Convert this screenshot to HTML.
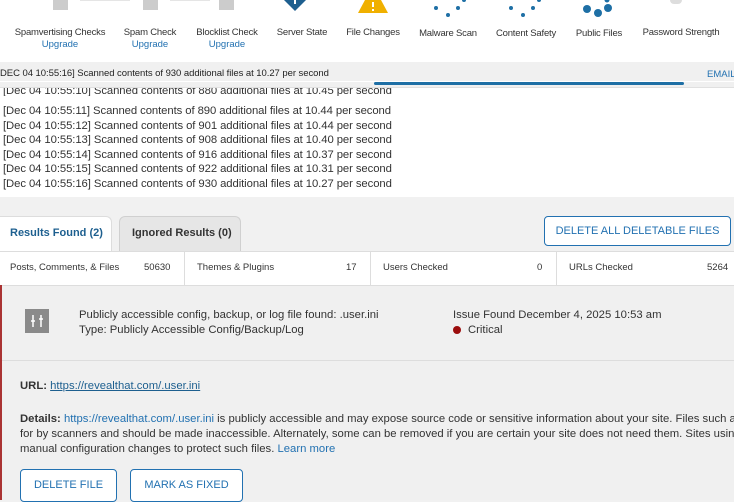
<!DOCTYPE html>
<html><head><meta charset="utf-8"><style>
*{margin:0;padding:0;box-sizing:border-box}
body{width:734px;height:500px;overflow:hidden;background:#f1f1f1;font-family:"Liberation Sans",sans-serif;color:#2c3338;position:relative;letter-spacing:0}
.a{position:absolute;white-space:nowrap}
.lbl{font-size:9.5px;color:#333;text-align:center;width:110px;letter-spacing:-0.2px}
.up{font-size:9.5px;color:#2271b1;text-align:center;width:110px}
.log{font-size:11.3px;color:#333;left:3px;letter-spacing:-0.08px}
.btn{position:absolute;border:1px solid #2271b1;border-radius:4px;background:#fff;color:#2271b1;font-size:11px;text-align:center;letter-spacing:0}
</style></head><body>
<div class="a" style="left:0;top:0;width:734px;height:62px;background:#fff"></div>
<!-- top icons -->
<div class="a" style="left:53px;top:0;width:15px;height:10px;background:#ccc"></div>
<div class="a" style="left:80px;top:0;width:50px;height:1px;background:#e5e5e5"></div>
<div class="a" style="left:143px;top:0;width:15px;height:10px;background:#ccc"></div>
<div class="a" style="left:170px;top:0;width:40px;height:1px;background:#e5e5e5"></div>
<div class="a" style="left:219px;top:0;width:15px;height:10px;background:#ccc"></div>
<svg class="a" style="left:284px;top:0" width="22" height="12"><path d="M0 0 L22 0 L11 11 Z" fill="#1e5f8f"/><rect x="10" y="0" width="2" height="4" fill="#fff"/></svg>
<svg class="a" style="left:357px;top:0" width="32" height="14"><path d="M8 0 L24 0 L31 13 L1 13 Z" fill="#f0b000"/><rect x="15" y="2" width="2" height="5" fill="#fff"/><rect x="15" y="9" width="2" height="2" fill="#fff"/></svg>
<svg class="a" style="left:430px;top:0" width="40" height="20"><circle cx="6" cy="8" r="2" fill="#1e6fa5"/><circle cx="18" cy="15" r="2" fill="#1e6fa5"/><circle cx="28" cy="8" r="2" fill="#1e6fa5"/><circle cx="34" cy="0" r="2" fill="#1e6fa5"/></svg>
<svg class="a" style="left:505px;top:0" width="40" height="20"><circle cx="6" cy="8" r="2" fill="#1e6fa5"/><circle cx="18" cy="15" r="2" fill="#1e6fa5"/><circle cx="28" cy="8" r="2" fill="#1e6fa5"/><circle cx="34" cy="0" r="2" fill="#1e6fa5"/></svg>
<svg class="a" style="left:580px;top:0" width="40" height="20"><circle cx="7" cy="9" r="4" fill="#1e6fa5"/><circle cx="18" cy="13" r="4" fill="#1e6fa5"/><circle cx="28" cy="8" r="4" fill="#1e6fa5"/><circle cx="27" cy="0" r="2.5" fill="#1e6fa5"/></svg>
<div class="a" style="left:670px;top:0;width:12px;height:4px;background:#ddd;border-radius:0 0 6px 6px"></div>
<div class="a lbl" style="left:5px;top:27px">Spamvertising Checks</div>
<div class="a up" style="left:5px;top:39px">Upgrade</div>
<div class="a lbl" style="left:95px;top:27px">Spam Check</div>
<div class="a up" style="left:95px;top:39px">Upgrade</div>
<div class="a lbl" style="left:172px;top:27px">Blocklist Check</div>
<div class="a up" style="left:172px;top:39px">Upgrade</div>
<div class="a lbl" style="left:247px;top:27px">Server State</div>
<div class="a lbl" style="left:318px;top:27px">File Changes</div>
<div class="a lbl" style="left:393px;top:28px">Malware Scan</div>
<div class="a lbl" style="left:471px;top:28px">Content Safety</div>
<div class="a lbl" style="left:544px;top:28px">Public Files</div>
<div class="a lbl" style="left:626px;top:27px">Password Strength</div>
<!-- status bar -->
<div class="a" style="left:0;top:62px;width:734px;height:26px;background:#f0f0f0;border-bottom:1px solid #e0e0e0"></div>
<div class="a" style="left:0;top:68px;font-size:9.5px;color:#222;letter-spacing:-0.05px">DEC 04 10:55:16] Scanned contents of 930 additional files at 10.27 per second</div>
<div class="a" style="left:707px;top:69px;font-size:9.5px;color:#2271b1">EMAIL</div>
<div class="a" style="left:0;top:81px;width:734px;height:1px;background:#fff"></div>
<div class="a" style="left:374px;top:82px;width:310px;height:3px;background:#1e6fa5;border-radius:2px"></div>
<!-- log -->
<div class="a" style="left:0;top:88px;width:734px;height:109px;background:#fff"></div>
<div class="a log" style="top:88px;height:8px;overflow:hidden;line-height:6px">[Dec 04 10:55:10] Scanned contents of 880 additional files at 10.45 per second</div>
<div class="a log" style="top:105px">[Dec 04 10:55:11] Scanned contents of 890 additional files at 10.44 per second</div>
<div class="a log" style="top:120px">[Dec 04 10:55:12] Scanned contents of 901 additional files at 10.44 per second</div>
<div class="a log" style="top:134px">[Dec 04 10:55:13] Scanned contents of 908 additional files at 10.40 per second</div>
<div class="a log" style="top:149px">[Dec 04 10:55:14] Scanned contents of 916 additional files at 10.37 per second</div>
<div class="a log" style="top:163px">[Dec 04 10:55:15] Scanned contents of 922 additional files at 10.31 per second</div>
<div class="a log" style="top:178px">[Dec 04 10:55:16] Scanned contents of 930 additional files at 10.27 per second</div>
<!-- tabs -->
<div class="a" style="left:0;top:216px;width:112px;height:36px;background:#fff;border:1px solid #ddd;border-bottom:none;border-left:none;border-radius:0 6px 0 0"></div>
<div class="a" style="left:10px;top:227px;font-size:11px;font-weight:bold;color:#1d5f8f">Results Found (2)</div>
<div class="a" style="left:119px;top:216px;width:122px;height:35px;background:#e6e6e6;border:1px solid #d0d0d0;border-bottom:none;border-radius:6px 6px 0 0"></div>
<div class="a" style="left:132px;top:227px;font-size:11px;font-weight:bold;color:#333">Ignored Results (0)</div>
<div class="btn" style="left:544px;top:216px;width:187px;height:30px;line-height:28px">DELETE ALL DELETABLE FILES</div>
<!-- stats -->
<div class="a" style="left:0;top:251px;width:734px;height:34px;background:#fff;border-top:1px solid #ddd"></div>
<div class="a" style="left:184px;top:251px;width:1px;height:34px;background:#ddd"></div>
<div class="a" style="left:370px;top:251px;width:1px;height:34px;background:#ddd"></div>
<div class="a" style="left:556px;top:251px;width:1px;height:34px;background:#ddd"></div>
<div class="a" style="left:10px;top:262px;font-size:9.5px;color:#333">Posts, Comments, &amp; Files</div>
<div class="a" style="left:144px;top:262px;font-size:9.5px;color:#333">50630</div>
<div class="a" style="left:197px;top:262px;font-size:9.5px;color:#333">Themes &amp; Plugins</div>
<div class="a" style="left:346px;top:262px;font-size:9.5px;color:#333">17</div>
<div class="a" style="left:383px;top:262px;font-size:9.5px;color:#333">Users Checked</div>
<div class="a" style="left:537px;top:262px;font-size:9.5px;color:#333">0</div>
<div class="a" style="left:569px;top:262px;font-size:9.5px;color:#333">URLs Checked</div>
<div class="a" style="left:707px;top:262px;font-size:9.5px;color:#333">5264</div>
<!-- issue -->
<div class="a" style="left:0;top:285px;width:734px;height:215px;background:#f0f0f0;border-top:1px solid #ddd"></div>
<div class="a" style="left:0;top:285px;width:2px;height:215px;background:#a33"></div>
<div class="a" style="left:2px;top:360px;width:732px;height:1px;background:#ddd"></div>
<svg class="a" style="left:25px;top:309px" width="24" height="24"><rect width="24" height="24" fill="#8a8a8a"/><path d="M8 6V18M6 12H10M16 6V18M14 10H18" stroke="#fff" stroke-width="1.5"/></svg>
<div class="a" style="left:79px;top:309px;font-size:11.3px;color:#333">Publicly accessible config, backup, or log file found: .user.ini</div>
<div class="a" style="left:79px;top:324px;font-size:11.3px;color:#333">Type: Publicly Accessible Config/Backup/Log</div>
<div class="a" style="left:453px;top:309px;font-size:11.3px;color:#333">Issue Found December 4, 2025 10:53 am</div>
<div class="a" style="left:453px;top:326px;width:8px;height:8px;border-radius:50%;background:#9b0d0d"></div>
<div class="a" style="left:468px;top:324px;font-size:11.3px;color:#333">Critical</div>
<div class="a" style="left:20px;top:380px;font-size:11.3px;color:#333"><b>URL:</b> <span style="color:#1d5f8f;text-decoration:underline">https://revealthat.com/.user.ini</span></div>
<div class="a" style="left:20px;top:412px;font-size:11.3px;color:#333;line-height:15px"><b>Details:</b> <span style="color:#2271b1">https://revealthat.com/.user.ini</span> is publicly accessible and may expose source code or sensitive information about your site. Files such as<br>for by scanners and should be made inaccessible. Alternately, some can be removed if you are certain your site does not need them. Sites using t<br>manual configuration changes to protect such files. <span style="color:#2271b1">Learn more</span></div>
<div class="btn" style="left:20px;top:469px;width:97px;height:33px;line-height:31px">DELETE FILE</div>
<div class="btn" style="left:130px;top:469px;width:113px;height:33px;line-height:31px">MARK AS FIXED</div>
</body></html>
